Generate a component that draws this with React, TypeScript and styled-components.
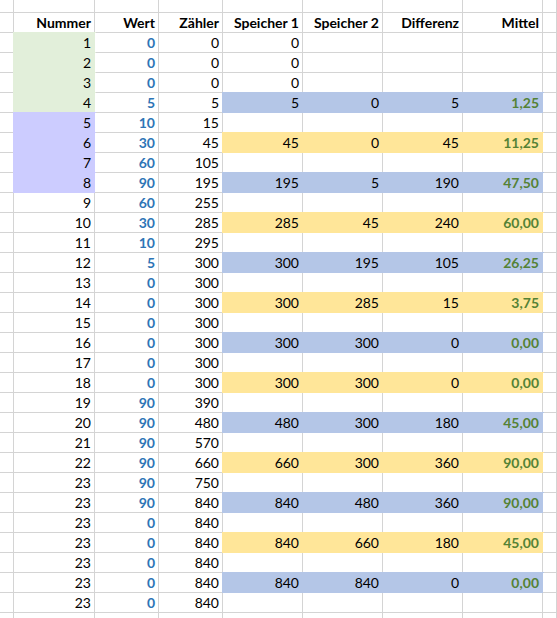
import React from 'react';
import styled, { createGlobalStyle } from 'styled-components';

const GlobalStyle = createGlobalStyle`
  body {
    margin: 0;
    background: #fff;
  }
`;

// widths of the sheet columns incl. the 1px gridline on the right
const COLUMNS = '14px 81px 64px 64px 80px 80px 80px 80px 1fr';

type Fill = 'green' | 'purple' | 'blue' | 'yellow';
type Tone = 'blue' | 'green';

const fills: Record<Fill, string> = {
  green: '#e2efda',
  purple: '#ccccff',
  blue: '#b4c6e7',
  yellow: '#ffe699',
};

const tones: Record<Tone, string> = {
  blue: '#2e75b6',
  green: '#548235',
};

const Sheet = styled.div`
  width: 557px;
  height: 618px;
  overflow: hidden;
  background: #fff;
  font-family: Lato, 'Liberation Sans', sans-serif;
  font-size: 14px;
  color: #000;
`;

const Row = styled.div<{ $height?: number }>`
  display: grid;
  grid-template-columns: ${COLUMNS};
  height: ${(p) => p.$height ?? 20}px;
`;

const Cell = styled.div<{ $fill?: Fill; $tone?: Tone; $bold?: boolean }>`
  box-sizing: border-box;
  height: 100%;
  padding-right: 3px;
  text-align: right;
  line-height: 19px;
  white-space: nowrap;
  background: ${(p) => (p.$fill ? fills[p.$fill] : '#fff')};
  border-right: 1px solid ${(p) => (p.$fill ? fills[p.$fill] : '#d4d4d4')};
  border-bottom: 1px solid ${(p) => (p.$fill ? fills[p.$fill] : '#d4d4d4')};
  box-shadow: ${(p) => (p.$fill ? `0 0 0 1px ${fills[p.$fill]}` : 'none')};
  color: ${(p) => (p.$tone ? tones[p.$tone] : '#000')};
  font-weight: ${(p) => (p.$bold || p.$tone ? 700 : 400)};
`;

interface SheetRow {
  n: number;
  w: number;
  z: number;
  first?: string;
  mem?: [string, string, string, string];
  fill?: 'blue' | 'yellow';
}

const rows: SheetRow[] = [
  { n: 1, w: 0, z: 0, first: '0' },
  { n: 2, w: 0, z: 0, first: '0' },
  { n: 3, w: 0, z: 0, first: '0' },
  { n: 4, w: 5, z: 5, mem: ['5', '0', '5', '1,25'], fill: 'blue' },
  { n: 5, w: 10, z: 15 },
  { n: 6, w: 30, z: 45, mem: ['45', '0', '45', '11,25'], fill: 'yellow' },
  { n: 7, w: 60, z: 105 },
  { n: 8, w: 90, z: 195, mem: ['195', '5', '190', '47,50'], fill: 'blue' },
  { n: 9, w: 60, z: 255 },
  { n: 10, w: 30, z: 285, mem: ['285', '45', '240', '60,00'], fill: 'yellow' },
  { n: 11, w: 10, z: 295 },
  { n: 12, w: 5, z: 300, mem: ['300', '195', '105', '26,25'], fill: 'blue' },
  { n: 13, w: 0, z: 300 },
  { n: 14, w: 0, z: 300, mem: ['300', '285', '15', '3,75'], fill: 'yellow' },
  { n: 15, w: 0, z: 300 },
  { n: 16, w: 0, z: 300, mem: ['300', '300', '0', '0,00'], fill: 'blue' },
  { n: 17, w: 0, z: 300 },
  { n: 18, w: 0, z: 300, mem: ['300', '300', '0', '0,00'], fill: 'yellow' },
  { n: 19, w: 90, z: 390 },
  { n: 20, w: 90, z: 480, mem: ['480', '300', '180', '45,00'], fill: 'blue' },
  { n: 21, w: 90, z: 570 },
  { n: 22, w: 90, z: 660, mem: ['660', '300', '360', '90,00'], fill: 'yellow' },
  { n: 23, w: 90, z: 750 },
  { n: 23, w: 90, z: 840, mem: ['840', '480', '360', '90,00'], fill: 'blue' },
  { n: 23, w: 0, z: 840 },
  { n: 23, w: 0, z: 840, mem: ['840', '660', '180', '45,00'], fill: 'yellow' },
  { n: 23, w: 0, z: 840 },
  { n: 23, w: 0, z: 840, mem: ['840', '840', '0', '0,00'], fill: 'blue' },
  { n: 23, w: 0, z: 840 },
];

const headers = ['Nummer', 'Wert', 'Zähler', 'Speicher 1', 'Speicher 2', 'Differenz', 'Mittel'];

function EmptyRow({ height }: { height?: number }) {
  return (
    <Row $height={height}>
      {Array.from({ length: 9 }).map((_, i) => (
        <Cell key={i} />
      ))}
    </Row>
  );
}

function App() {
  return (
    <Sheet>
      <GlobalStyle />
      <EmptyRow height={13} />
      <Row>
        <Cell />
        {headers.map((h) => (
          <Cell key={h} $bold>
            {h}
          </Cell>
        ))}
        <Cell />
      </Row>
      {rows.map((r, i) => {
        // Nummer column: first block green, second block purple
        const numFill: Fill | undefined = i < 4 ? 'green' : i < 8 ? 'purple' : undefined;
        const mem = r.mem ?? [r.first ?? '', '', '', ''];
        return (
          <Row key={i}>
            <Cell />
            <Cell $fill={numFill}>{r.n}</Cell>
            <Cell $tone="blue">{r.w}</Cell>
            <Cell>{r.z}</Cell>
            <Cell $fill={r.fill}>{mem[0]}</Cell>
            <Cell $fill={r.fill}>{mem[1]}</Cell>
            <Cell $fill={r.fill}>{mem[2]}</Cell>
            <Cell $fill={r.fill} $tone="green">
              {mem[3]}
            </Cell>
            <Cell />
          </Row>
        );
      })}
      <EmptyRow />
    </Sheet>
  );
}

export default App;
